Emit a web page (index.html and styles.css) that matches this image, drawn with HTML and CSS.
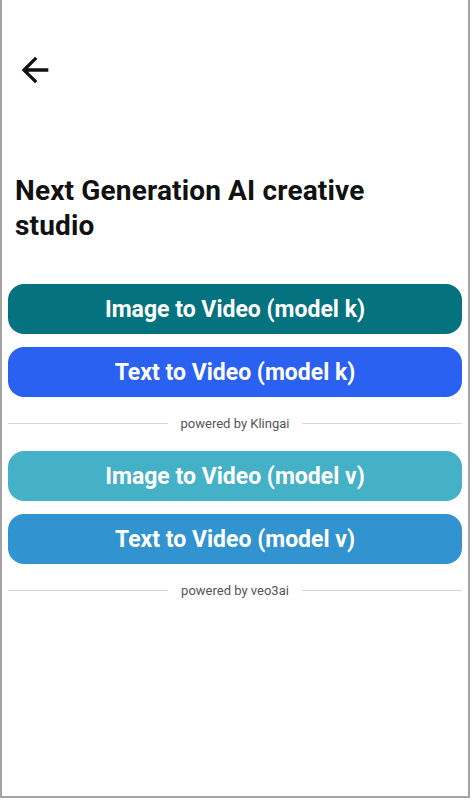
FILE: index.html
```html
<!DOCTYPE html>
<html lang="en">
<head>
<meta charset="utf-8">
<title>AI Creative Studio</title>
<link rel="stylesheet" href="styles.css">
</head>
<body>
<div class="frame">
  <header class="topbar">
    <button class="back" aria-label="Back">
      <svg viewBox="0 0 24 24" width="40" height="40"><path d="M20 11H7.83l5.59-5.59L12 4l-8 8 8 8 1.41-1.41L7.83 13H20v-2z" fill="#111"/></svg>
    </button>
  </header>

  <h1 class="title">Next Generation AI creative studio</h1>

  <section class="group">
    <button class="action teal">Image to Video (model k)</button>
    <button class="action blue">Text to Video (model k)</button>
  </section>
  <div class="divider"><span>powered by Klingai</span></div>

  <section class="group">
    <button class="action sky">Image to Video (model v)</button>
    <button class="action ocean">Text to Video (model v)</button>
  </section>
  <div class="divider"><span>powered by veo3ai</span></div>
</div>
</body>
</html>
```

FILE: styles.css
```css
html, body {
  margin: 0;
  padding: 0;
  background: #fff;
}

body {
  font-family: Roboto, "Liberation Sans", Arial, sans-serif;
  color: #111;
}

.frame {
  width: 470px;
  height: 798px;
  box-sizing: border-box;
  border: 2px solid #a3a3a3;
  border-top: none;
  padding: 0 6px;
}

.topbar {
  padding: 50px 0 0 7px;
  height: 40px;
}

.back {
  display: block;
  width: 40px;
  height: 40px;
  padding: 0;
  border: none;
  background: none;
}

.back svg {
  display: block;
}

.title {
  margin: 83px 0 0 7px;
  font-size: 28px;
  line-height: 35px;
  letter-spacing: 0.15px;
  font-weight: 700;
  width: 400px;
}

.group {
  display: flex;
  flex-direction: column;
  gap: 13px;
  margin-top: 41px;
}

.divider + .group {
  margin-top: 0;
}

.action {
  display: block;
  width: 100%;
  height: 50px;
  border: none;
  border-radius: 16px;
  color: #fff;
  font-family: Roboto, "Liberation Sans", Arial, sans-serif;
  font-size: 23px;
  font-weight: 700;
  padding: 0;
}

.teal { background: #05727f; }
.blue { background: #2a61f1; }
.sky { background: #45b1c7; }
.ocean { background: #3193cf; }

.divider {
  display: flex;
  align-items: center;
  gap: 13px;
  height: 54px;
  padding-bottom: 2px;
  box-sizing: border-box;
  font-size: 13px;
  color: #555;
}

.divider::before,
.divider::after {
  content: "";
  flex: 1;
  height: 1px;
  background: #d8d8d8;
}
```
